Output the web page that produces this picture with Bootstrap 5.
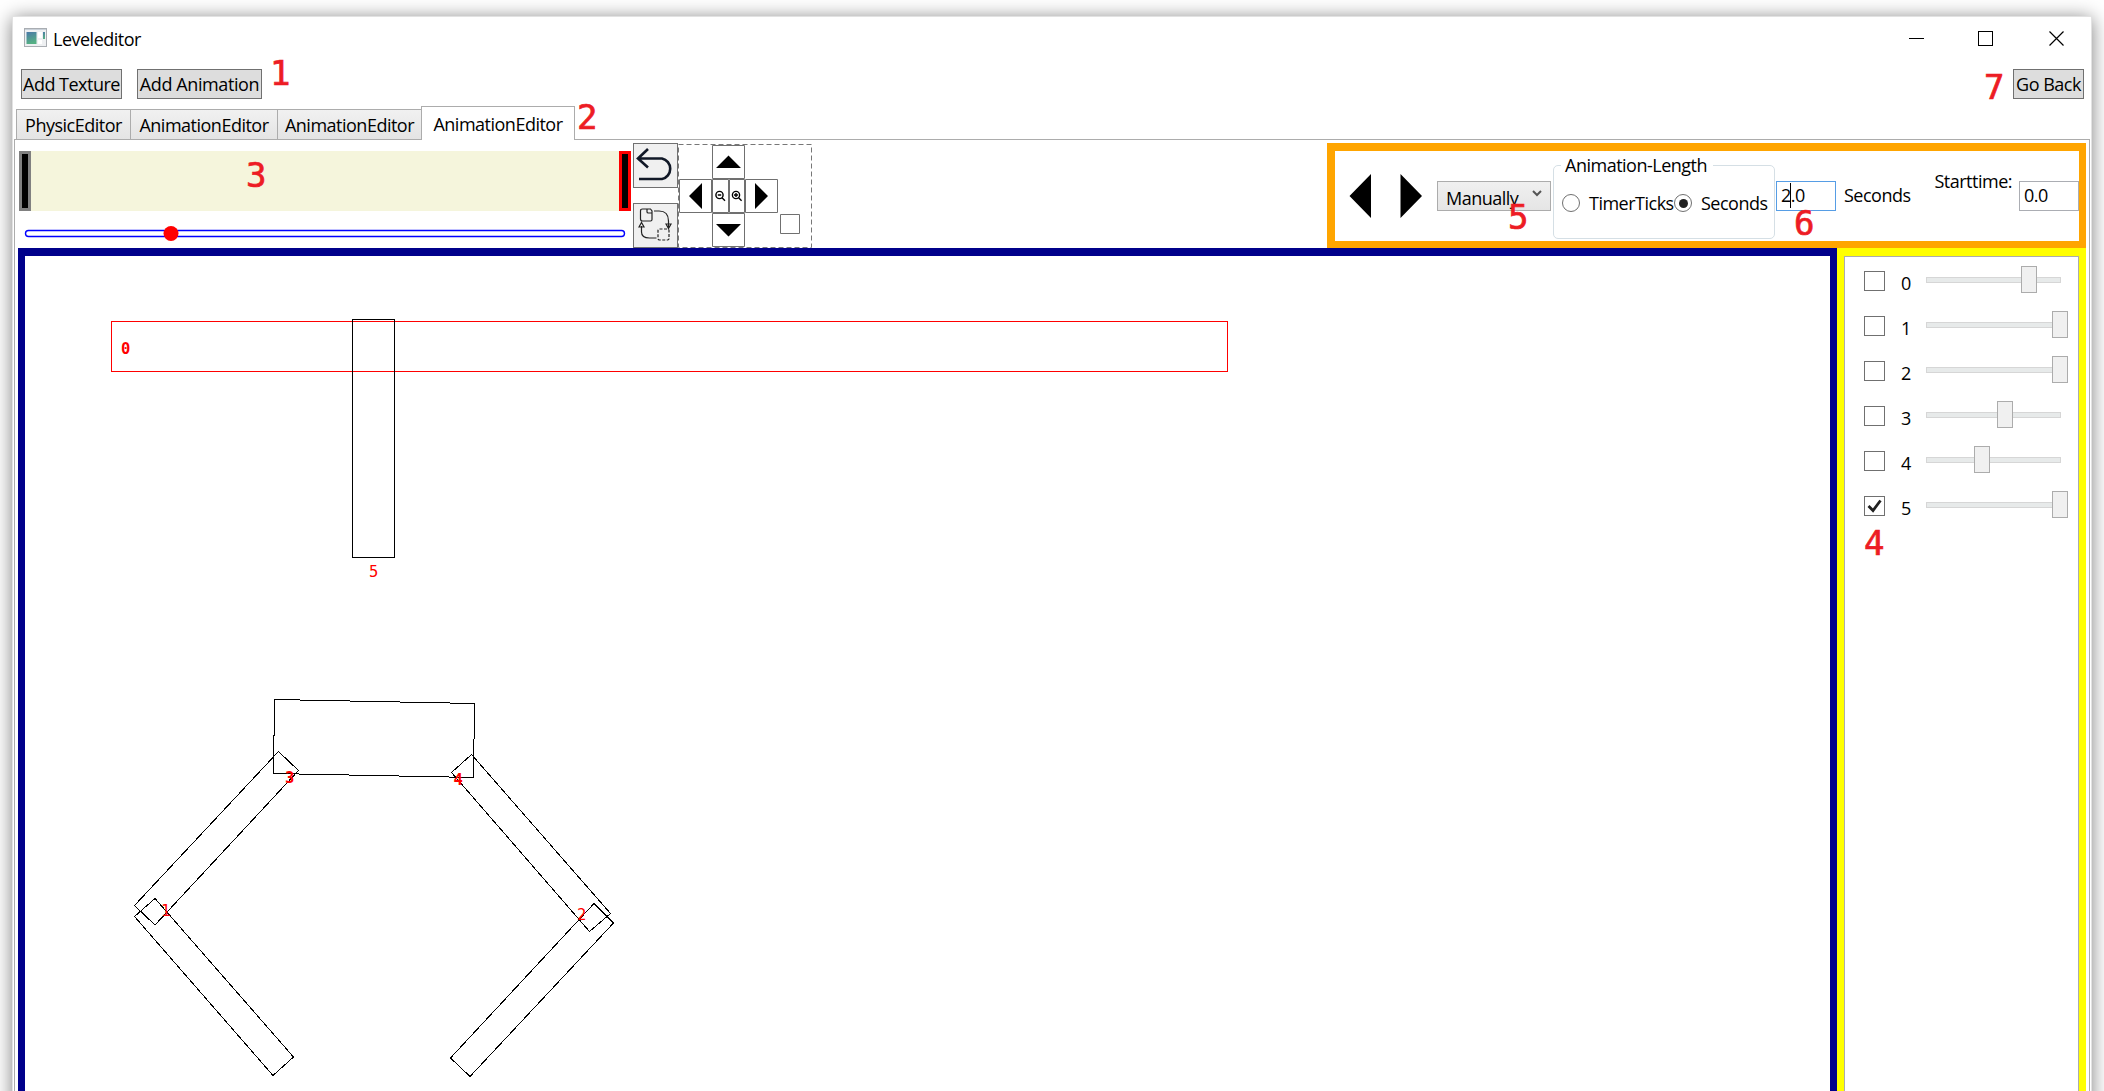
<!DOCTYPE html>
<html lang="en">
<head>
<meta charset="utf-8">
<title>Leveleditor</title>
<link href="https://cdn.jsdelivr.net/npm/bootstrap@5.3.0/dist/css/bootstrap.min.css" rel="stylesheet">
<style>
body{background:#fff;height:1091px;overflow:hidden;padding:16px 12px 0;font:18px/24px "Open Sans","Noto Sans",sans-serif;letter-spacing:-.5px;color:#000}
.win{height:1100px;background:#fff;border:1px solid #e2e2e2;box-shadow:0 2px 18px rgba(0,0,0,.5);padding-left:1px}
.titlebar{height:52px;padding:10px 26px 0 10px}
.titlebar .app-icon{margin-top:1px;margin-right:6px}
.titlebar .win-ctl{margin-top:-1px}
.tools{height:37px;padding:0 7px 0 7px}
.wbtn{height:30px;background:#ddd;border:1px solid #707070;border-radius:0;padding:0;line-height:26px;font-size:18px;letter-spacing:inherit;color:#000;text-align:center;white-space:nowrap}
.w-tex{width:101px;margin-right:15px}.w-ani{width:125px;letter-spacing:-.4px}.w-back{width:71px}
.tabs{height:34px;padding-left:2px;position:relative;z-index:1}
.tab-i{height:31px;border:1px solid #acacac;border-right-width:0;background:linear-gradient(#f1f1f1,#e4e4e4);text-align:center;padding-top:3px}
.tab-i.on{height:34px;background:#fff;border-bottom:0;border-right-width:1px;padding-top:5px}
.t1{width:114px}.t2{width:147px}.t3{width:144px}.t4{width:154px}
.pane{border:1px solid #acacac;height:970px;padding:3px 3px 0 3px;margin:-1px 1px 0 0}
.bar{height:105px}
.timeline{width:612px;margin:8px 0 0 1px;height:60px;background:#f5f5dc}
.grip{width:12px;background:#000;border:3px solid #808080}
.grip.end-g{border-color:red}
.seek{display:block;margin:15px 0 0 5px}
.icobtn{width:45px;height:45px;border:1px solid #707070;background:#f0f0f0;display:block}
.icobtn svg{display:block}
.slot{margin-left:2px}
.opts{width:759px;height:105px;border:solid orange;border-width:8px 7px 7px 8px}
.arr{margin-top:23px}
.combo{width:114px;height:30px;margin-top:30px;margin-left:14px;border:1px solid #acacac;background:linear-gradient(#f0f0f0,#e5e5e5);padding:4px 7px 0 8px;line-height:24px;white-space:nowrap}
.combo svg{margin-top:2px}
.grp{width:222px;height:74px;margin:14px 0 0 2px;border:1px solid #d5dfe5;border-radius:5px}
.grp-title{margin:-13px 0 0 7px;background:#fff;width:152px;padding-left:4px;height:24px;white-space:nowrap}
.rads{padding:14px 0 0 8px}
.rad{width:18px;height:18px;border:1px solid #707070;border-radius:50%;background:#fff;margin:3px 9px 0 0;display:flex;align-items:center;justify-content:center;flex:none}
.rad.on::after{content:"";width:9px;height:9px;border-radius:50%;background:#212121}
.tt{width:85px}
.num{width:60px;height:30px;margin-top:30px;border:1px solid #abadb3;padding:1px 4px;position:relative}
.num.focus-in{border-color:#569de5;margin-left:1px}
.num .cur{position:absolute;left:13px;top:1px;width:1px;height:25px;background:#000}
.secs{margin:32px 0 0 8px}
.start-l{margin-top:18px;padding-right:7px}
.work{height:860px}
.stage{width:1819px;border:solid #00008b;border-width:8px 7px 0}
.side{width:249px;border:solid #ff0;border-width:8px 7px 0}
.list-box{border:1px solid #acacac;height:100%;padding:9px 0 0 19px}
.lrow{height:45px}
.cbx{width:21px;height:20px;border:1px solid #707070;background:#fff;margin-top:5px}
.lab{width:41px;padding:5px 0 0 16px}
.track{width:135px;height:6px;margin-top:11px;background:#e7eaea;border:1px solid #d6d6d6;position:relative}
.thumb{position:absolute;top:-12px;width:16px;height:27px;border:1px solid #acacac;background:#f0f0f0}
.note{position:absolute;z-index:5;color:#ed1c24;font:34px/34px "DejaVu Sans Mono",monospace;letter-spacing:0;-webkit-text-stroke:.7px #ed1c24}
</style>
<script src="https://cdn.jsdelivr.net/npm/bootstrap@5.3.0/dist/js/bootstrap.bundle.min.js"></script>
</head>
<body>
<div class="win">
  <header class="titlebar d-flex align-items-start">
    <svg class="app-icon" width="23" height="19" viewBox="0 0 23 19"><defs><linearGradient id="g" x1="0" y1="0" x2=".3" y2="1"><stop offset="0" stop-color="#4a78a8"/><stop offset="1" stop-color="#55b084"/></linearGradient></defs><rect x=".5" y=".5" width="22" height="18" fill="#eef0f2" stroke="#a9adb2"/><path d="M1 1.500h21" stroke="#c9d0d8"/><rect x="2.500" y="4" width="10" height="12" fill="url(#g)"/><path d="M14 4h4v6h-4zM14 12h4v4h-4z" fill="#fff"/><rect x="19" y="4" width="2" height="7" fill="url(#g)"/></svg>
    <span>Leveleditor</span>
    <svg class="win-ctl ms-auto" width="156" height="30" viewBox="0 0 156 30" fill="none" stroke="#000" shape-rendering="crispEdges"><path d="M0 12.500h15M69.500 5.500h14v14h-14z"/><path d="M140.500 5.500l14 14M154.500 5.500l-14 14" stroke-width="1.200" shape-rendering="auto"/></svg>
  </header>
  <div class="tools d-flex">
    <button class="wbtn w-tex">Add Texture</button>
    <button class="wbtn w-ani">Add Animation</button>
    <button class="wbtn w-back ms-auto">Go Back</button>
  </div>
  <nav class="tabs d-flex align-items-end">
    <div class="tab-i t1">PhysicEditor</div>
    <div class="tab-i t2">AnimationEditor</div>
    <div class="tab-i t3">AnimationEditor</div>
    <div class="tab-i t4 on">AnimationEditor</div>
  </nav>
  <main class="pane">
    <div class="bar d-flex">
      <div>
        <div class="timeline d-flex justify-content-between"><div class="grip"></div><div class="grip end-g"></div></div>
        <svg class="seek" width="608" height="16"><rect x="2.500" y="4.500" width="599" height="6" rx="3" fill="#fff" stroke="#00f" stroke-width="1.400"/><circle cx="148" cy="7.500" r="7.500" fill="red"/></svg>
      </div>
      <div class="slot d-flex flex-column justify-content-between">
        <div class="icobtn"><svg width="43" height="43" viewBox="0 0 43 43" fill="none" stroke="#111827" stroke-width="2.600"><path d="M14 5L4 14.500L14 23.500M4.500 14.500H28A10.500 10.500 0 0 1 28 35H5"/></svg></div>
        <div class="icobtn"><svg width="43" height="43" viewBox="0 0 43 43" fill="none" stroke="#222" stroke-width="1.200"><path d="M8.500 5h8l1.500 2v8.500q0 1.500-1.500 1.500h-8Q6.500 17 6.500 15V7Q6.500 5 8.500 5zM13 5v3q0 1 1.500 1h3M20 7h5q9.500 0 9.500 10v7M32 20l2.500 4.500L37 20zM7.500 22v6q0 6 8 6h7M5 23l2.500-4.500L10 23z"/><rect x="24" y="25" width="11" height="11" rx="1.500" stroke-dasharray="3 1.500"/></svg></div>
      </div>
      <svg width="134" height="105" viewBox="678 143 134 105"><rect x="678.500" y="144.500" width="133" height="103" fill="none" stroke="#777" stroke-dasharray="5 3"/><g fill="#fff" stroke="#707070"><path d="M712.500 145.500h32v33h-32zM679.500 179.500h32v33h-32zM712.500 179.500h16v33h-16zM729.500 179.500h15v33h-15zM745.500 179.500h32v33h-32zM712.500 213.500h32v33h-32zM780.500 214.500h19v19h-19z"/></g><path d="M716 168l12.500-12.500L741 168zM702 183l-13 13 13 13zM755 183l13 13-13 13zM716 224h25l-12.500 12.500z"/><g fill="none" stroke="#000" stroke-width="1.400"><circle cx="719.500" cy="195" r="3.600"/><path d="M717.800 195h3.400M722 197.800l3 3"/><circle cx="736" cy="195" r="3.600"/><path d="M734 195h4M736 193v4M738.600 197.800l3 3"/></g></svg>
      <section class="opts ms-auto d-flex">
        <svg class="arr" width="88" height="44" viewBox="0 0 88 44"><path d="M36 0L14.500 22L36 44zM65.500 0L87 22L65.500 44z"/></svg>
        <div class="combo d-flex justify-content-between"><span>Manually</span><svg width="12" height="12" viewBox="0 0 12 12" fill="none" stroke="#555" stroke-width="2"><path d="M2 3l4 4 4-4"/></svg></div>
        <div class="grp"><div class="grp-title">Animation-Length</div>
          <div class="rads d-flex"><span class="rad"></span><span class="tt">TimerTicks</span><span class="rad on"></span><span>Seconds</span></div></div>
        <div class="num focus-in">2.0<span class="cur"></span></div>
        <div class="secs">Seconds</div>
        <div class="start-l ms-auto">Starttime:</div>
        <div class="num">0.0</div>
      </section>
    </div>
    <div class="work d-flex">
      <div class="stage">
        <svg width="1805" height="852" viewBox="25 256 1805 852" fill="none" stroke="#000" shape-rendering="crispEdges"><path stroke="red" d="M111.500 321.500H1227.500V371.500H111.500z"/><path d="M352.500 319.500h42v238h-42zM274.500 699.500L474.500 703.500L473.500 777.500L273.500 773.500zM278.500 751.500L298.500 770.500L155 925L134.500 905.500zM155 898.500L134.500 916.500L273 1075.500L293.500 1057zM471.500 754.500L451.500 772.500L589.500 931.500L610.500 913.500zM594 903.500L613.500 923L470 1076.500L450.500 1058z"/>
        <g fill="red" stroke="none" font-family="DejaVu Sans Mono" font-size="15.500" letter-spacing="0"><text x="121" y="354" font-weight="bold">0</text><text x="369" y="577">5</text><text x="285" y="783" font-weight="bold">3</text><text x="453.500" y="785" font-weight="bold">4</text><text x="161" y="916">1</text><text x="577" y="920">2</text></g></svg>
      </div>
      <div class="side"><div class="list-box">
        <div class="lrow d-flex"><span class="cbx"></span><span class="lab">0</span><div class="track"><i class="thumb" style="left:94px"></i></div></div>
        <div class="lrow d-flex"><span class="cbx"></span><span class="lab">1</span><div class="track"><i class="thumb" style="left:125px"></i></div></div>
        <div class="lrow d-flex"><span class="cbx"></span><span class="lab">2</span><div class="track"><i class="thumb" style="left:125px"></i></div></div>
        <div class="lrow d-flex"><span class="cbx"></span><span class="lab">3</span><div class="track"><i class="thumb" style="left:70px"></i></div></div>
        <div class="lrow d-flex"><span class="cbx"></span><span class="lab">4</span><div class="track"><i class="thumb" style="left:47px"></i></div></div>
        <div class="lrow d-flex"><span class="cbx d-flex"><svg width="19" height="18" viewBox="0 0 19 18" fill="none" stroke="#212121" stroke-width="2.800"><path d="M3.500 9l4.500 4.500L15.500 3.500"/></svg></span><span class="lab">5</span><div class="track"><i class="thumb" style="left:125px"></i></div></div>
      </div></div>
    </div>
  </main>
</div>
<span class="note" style="left:270px;top:56px">1</span>
<span class="note" style="left:577px;top:100px">2</span>
<span class="note" style="left:246px;top:158px">3</span>
<span class="note" style="left:1864px;top:526px">4</span>
<span class="note" style="left:1508px;top:200px">5</span>
<span class="note" style="left:1794px;top:206px">6</span>
<span class="note" style="left:1984px;top:70px">7</span>
</body>
</html>
